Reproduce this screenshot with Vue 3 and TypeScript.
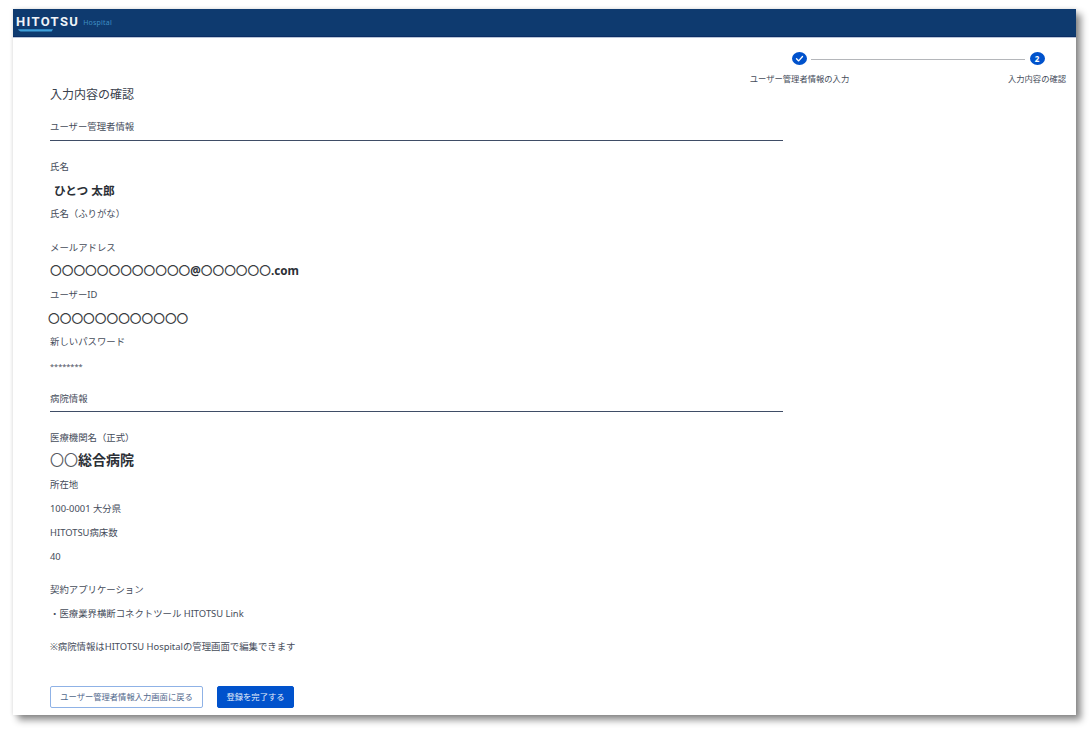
<script setup lang="ts">
interface Step {
  label: string
  done: boolean
  mark: string
}
const steps: Step[] = [
  { label: 'ユーザー管理者情報の入力', done: true, mark: '' },
  { label: '入力内容の確認', done: false, mark: '2' },
]
</script>

<template>
  <div class="page">
    <div class="window">
      <header class="topbar">
        <div class="logo">
          <div class="brand">
            <span class="brand-name">HITOTSU</span>
            <svg class="swoosh" width="36" height="3" viewBox="0 0 36 3" aria-hidden="true">
              <path d="M0 0.2 H35 L33.6 2.6 H4 C2 2.6 0.8 1.6 0 0.2 Z" fill="#3fa0da" />
            </svg>
          </div>
          <span class="brand-sub">Hospital</span>
        </div>
      </header>

      <div class="stepper">
        <div class="step step-first">
          <span class="dot">
            <svg v-if="steps[0].done" width="9" height="9" viewBox="0 0 12 12" aria-hidden="true">
              <path d="M2 6.4 L4.9 9.2 L10 3.4" fill="none" stroke="#fff" stroke-width="1.8" stroke-linecap="round" stroke-linejoin="round" />
            </svg>
          </span>
          <span class="step-label">{{ steps[0].label }}</span>
        </div>
        <div class="connector"></div>
        <div class="step step-last">
          <span class="dot">{{ steps[1].mark }}</span>
          <span class="step-label">{{ steps[1].label }}</span>
        </div>
      </div>

      <main class="content">
        <h1 class="title">入力内容の確認</h1>

        <h2 class="section">ユーザー管理者情報</h2>
        <div class="label first">氏名</div>
        <div class="strong name">ひとつ 太郎</div>
        <div class="label">氏名（ふりがな）</div>
        <div class="label gap-empty">メールアドレス</div>
        <div class="strong mail"><span class="circles">〇〇〇〇〇〇〇〇〇〇〇〇</span>@<span class="circles">〇〇〇〇〇〇</span>.com</div>
        <div class="label">ユーザーID</div>
        <div class="strong userid"><span class="circles">〇〇〇〇〇〇〇〇〇〇〇〇</span></div>
        <div class="label">新しいパスワード</div>
        <div class="label mask">********</div>

        <h2 class="section second">病院情報</h2>
        <div class="label first">医療機関名（正式）</div>
        <div class="strong hospital"><span class="circles hosp-circles">〇〇</span>総合病院</div>
        <div class="label">所在地</div>
        <div class="label">100-0001 大分県</div>
        <div class="label">HITOTSU病床数</div>
        <div class="label">40</div>
        <div class="label gap-app">契約アプリケーション</div>
        <div class="label">・医療業界横断コネクトツール HITOTSU Link</div>
        <div class="label gap-note">※病院情報はHITOTSU Hospitalの管理画面で編集できます</div>

        <div class="actions">
          <button type="button" class="btn btn-outline">ユーザー管理者情報入力画面に戻る</button>
          <button type="button" class="btn btn-primary">登録を完了する</button>
        </div>
      </main>
    </div>
  </div>
</template>

<style>
html,
body {
  margin: 0;
  background: #fff;
}
</style>

<style scoped>
.page {
  box-sizing: border-box;
  width: 1091px;
  height: 740px;
  padding: 9px 15px 25px 13px;
  overflow: hidden;
  font-family: "Noto Sans", "Noto Sans CJK JP", sans-serif;
  font-size: 9.4px;
  color: #454c5a;
}
.window {
  height: 706px;
  background: #fff;
  box-shadow: 5px 5px 7px rgba(0, 0, 0, 0.45), 0 0 4px rgba(0, 0, 0, 0.12);
}
.topbar {
  box-sizing: border-box;
  height: 29px;
  background: #0e3a6f;
  border-bottom: 1px solid #b9c5d9;
  box-shadow: inset 0 -1px 0 #0a2c63;
  padding-left: 3px;
}
.logo {
  display: flex;
  align-items: flex-start;
  gap: 4px;
}
.brand {
  display: flex;
  flex-direction: column;
  height: 28px;
}
.brand-name {
  font-family: Roboto, "Noto Sans", sans-serif;
  font-weight: 700;
  font-size: 13px;
  line-height: 15px;
  margin-top: 5px;
  letter-spacing: 1.35px;
  color: #eef3f8;
}
.swoosh {
  display: block;
  margin: 0 0 0 2px;
}
.brand-sub {
  font-size: 7px;
  line-height: 9px;
  margin-top: 9px;
  letter-spacing: 0.2px;
  color: #3f8fc4;
}
.stepper {
  display: flex;
  box-sizing: border-box;
  width: 316px;
  height: 48px;
  margin-left: auto;
  margin-right: 10px;
  padding-top: 14px;
}
.step {
  display: flex;
  flex-direction: column;
  align-items: center;
  flex: none;
}
.step-first {
  width: 99px;
}
.step-last {
  width: 58px;
}
.dot {
  display: flex;
  align-items: center;
  justify-content: center;
  width: 15px;
  height: 15px;
  border-radius: 50%;
  background: #0052cc;
  color: #fff;
  font-size: 8px;
  font-weight: 700;
  line-height: 1;
}
.step-label {
  margin-top: 7px;
  font-size: 8.3px;
  line-height: 14px;
  white-space: nowrap;
}
.connector {
  flex: 1;
  height: 1px;
  margin: 7px -17px 0 -38px;
  background: #b4b6ba;
}
.content {
  width: 733px;
  margin-left: 37px;
}
.title {
  margin: 0;
  font-size: 12px;
  font-weight: 400;
  line-height: 18px;
  color: #3a414d;
}
.section {
  box-sizing: border-box;
  height: 23px;
  margin: 14px 0 0;
  border-bottom: 1px solid #3f4d66;
  font-size: 9.4px;
  font-weight: 400;
  line-height: 18px;
}
.section.second {
  height: 22px;
  margin-top: 12px;
}
.label {
  height: 24px;
  line-height: 24px;
  white-space: nowrap;
}
.label.first {
  margin-top: 14px;
}
.label.gap-empty {
  margin-top: 10px;
}
.label.gap-app {
  margin-top: 9px;
}
.label.gap-note {
  margin-top: 9px;
}
.label.mask {
  font-size: 7.4px;
}
.strong {
  height: 23px;
  line-height: 22px;
  font-weight: 700;
  color: #2b2f36;
  white-space: nowrap;
}
.circles {
  font-family: "Noto Sans CJK JP", sans-serif;
  font-weight: 500;
  color: #3a3d42;
}
.name {
  padding-left: 4px;
  font-size: 11.7px;
}
.mail {
  font-size: 11.7px;
  line-height: 19px;
}
.userid {
  margin-left: -2px;
  font-size: 11.7px;
}
.hospital {
  font-size: 14px;
  line-height: 18px;
}
.hosp-circles {
  font-weight: 400;
  color: #55585e;
}
.actions {
  display: flex;
  gap: 14px;
  margin-top: 27px;
}
.btn {
  box-sizing: border-box;
  height: 22px;
  padding: 0;
  border-radius: 2px;
  font-family: inherit;
  font-size: 8.3px;
  line-height: 1;
}
.btn-outline {
  width: 153px;
  background: #fff;
  border: 1px solid #8fb2e6;
  color: #51688c;
}
.btn-primary {
  width: 77px;
  background: #0052cc;
  border: 1px solid #0052cc;
  color: #e6eefb;
}
</style>
